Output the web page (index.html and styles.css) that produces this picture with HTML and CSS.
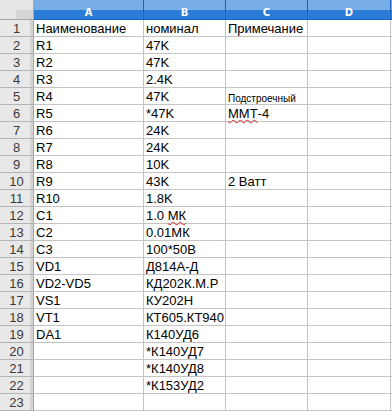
FILE: index.html
```html
<!DOCTYPE html>
<html lang="ru">
<head>
    <meta charset="UTF-8">
    <title>Спецификация</title>
    <link rel="stylesheet" href="styles.css">
</head>
<body>
    <div class="sheet">
        <div class="corner"><span></span></div>
        <div class="ch">A</div><div class="ch">B</div><div class="ch">C</div><div class="ch">D</div><div class="ch last"></div>

        <div class="rh">1</div><div class="c">Наименование</div><div class="c">номинал</div><div class="c">Примечание</div><div class="c"></div><div class="c"></div>
        <div class="rh">2</div><div class="c">R1</div><div class="c">47K</div><div class="c"></div><div class="c"></div><div class="c"></div>
        <div class="rh">3</div><div class="c">R2</div><div class="c">47K</div><div class="c"></div><div class="c"></div><div class="c"></div>
        <div class="rh">4</div><div class="c">R3</div><div class="c">2.4K</div><div class="c"></div><div class="c"></div><div class="c"></div>
        <div class="rh">5</div><div class="c">R4</div><div class="c">47K</div><div class="c small">Подстроечный</div><div class="c"></div><div class="c"></div>
        <div class="rh">6</div><div class="c">R5</div><div class="c">*47K</div><div class="c"><span class="typo">ММТ</span>-4</div><div class="c"></div><div class="c"></div>
        <div class="rh">7</div><div class="c">R6</div><div class="c">24K</div><div class="c"></div><div class="c"></div><div class="c"></div>
        <div class="rh">8</div><div class="c">R7</div><div class="c">24K</div><div class="c"></div><div class="c"></div><div class="c"></div>
        <div class="rh">9</div><div class="c">R8</div><div class="c">10K</div><div class="c"></div><div class="c"></div><div class="c"></div>
        <div class="rh">10</div><div class="c">R9</div><div class="c">43K</div><div class="c">2 Ватт</div><div class="c"></div><div class="c"></div>
        <div class="rh">11</div><div class="c">R10</div><div class="c">1.8K</div><div class="c"></div><div class="c"></div><div class="c"></div>
        <div class="rh">12</div><div class="c">C1</div><div class="c">1.0 <span class="typo">МК</span></div><div class="c"></div><div class="c"></div><div class="c"></div>
        <div class="rh">13</div><div class="c">C2</div><div class="c">0.01МК</div><div class="c"></div><div class="c"></div><div class="c"></div>
        <div class="rh">14</div><div class="c">C3</div><div class="c">100*50В</div><div class="c"></div><div class="c"></div><div class="c"></div>
        <div class="rh">15</div><div class="c">VD1</div><div class="c">Д814А-Д</div><div class="c"></div><div class="c"></div><div class="c"></div>
        <div class="rh">16</div><div class="c">VD2-VD5</div><div class="c">КД202К.М.Р</div><div class="c"></div><div class="c"></div><div class="c"></div>
        <div class="rh">17</div><div class="c">VS1</div><div class="c">КУ202Н</div><div class="c"></div><div class="c"></div><div class="c"></div>
        <div class="rh">18</div><div class="c">VT1</div><div class="c">КТ605.КТ940</div><div class="c"></div><div class="c"></div><div class="c"></div>
        <div class="rh">19</div><div class="c">DA1</div><div class="c">К140УД6</div><div class="c"></div><div class="c"></div><div class="c"></div>
        <div class="rh">20</div><div class="c"></div><div class="c">*К140УД7</div><div class="c"></div><div class="c"></div><div class="c"></div>
        <div class="rh">21</div><div class="c"></div><div class="c">*К140УД8</div><div class="c"></div><div class="c"></div><div class="c"></div>
        <div class="rh">22</div><div class="c"></div><div class="c">*К153УД2</div><div class="c"></div><div class="c"></div><div class="c"></div>
        <div class="rh">23</div><div class="c"></div><div class="c"></div><div class="c"></div><div class="c"></div><div class="c"></div>
    </div>
</body>
</html>
```

FILE: styles.css
```css
body {
    margin: 0;
    padding: 0;
    background: #ffffff;
    font-family: "Liberation Sans", Arial, sans-serif;
    overflow: hidden;
}
.sheet {
    display: grid;
    grid-template-columns: 34px 110px 82px 82px 83px 1fr;
    grid-template-rows: 20px;
    grid-auto-rows: 17px;
}
.sheet > div {
    box-sizing: border-box;
    white-space: nowrap;
}
.corner {
    position: relative;
    background: #e6e6e6;
    border-right: 1px solid #a8a8a8;
    border-bottom: 1px solid #a8a8a8;
}
.corner span {
    position: absolute;
    right: 0;
    bottom: 0;
    width: 17px;
    height: 9px;
    background: #d4d4d4;
}
/* column letters, whole columns selected */
.ch {
    background: linear-gradient(#78aee8 0, #78aee8 10px, #2b7cd6 10px);
    border-right: 1px solid #1d63b8;
    border-bottom: 1px solid #1d63b8;
    color: #ffffff;
    font-family: "DejaVu Sans", sans-serif;
    font-weight: bold;
    font-size: 10px;
    line-height: 12px;
    padding-top: 7px;
    text-align: center;
}
.ch.last {
    border-right: none;
}
.rh {
    background: linear-gradient(to right, #e8e8e8 0, #e8e8e8 30px, #d2d2d2 30px);
    border-right: 1px solid #a8a8a8;
    border-bottom: 1px solid #b4b4b4;
    color: #3a3a3a;
    font-size: 13px;
    line-height: 14px;
    padding-top: 2px;
    text-align: center;
}
.c {
    border-right: 1px solid #c4c4c4;
    border-bottom: 1px solid #c4c4c4;
    color: #000000;
    font-size: 13px;
    line-height: 14px;
    padding: 2px 0 0 2px;
}
.c.small {
    font-size: 10px;
    padding-top: 4px;
}
/* spell-check squiggle */
.typo {
    text-decoration: underline wavy #e01b1b;
    text-decoration-thickness: 1px;
    text-underline-offset: 1px;
    text-decoration-skip-ink: none;
}
```
